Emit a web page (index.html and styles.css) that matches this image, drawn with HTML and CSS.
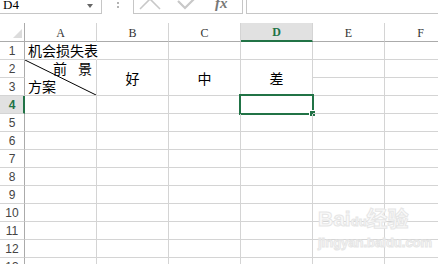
FILE: index.html
```html
<!DOCTYPE html>
<html lang="zh-CN">
<head>
  <meta charset="UTF-8">
  <title>机会损失表</title>
  <link rel="stylesheet" href="styles.css">
</head>
<body>
<!-- Formula bar -->
<div class="formula-bar">
  <div class="name-box">
    <span class="name-text">D4</span>
    <span class="name-arrow"></span>
  </div>
  <div class="bar-sep">
    <svg width="4" height="12" viewBox="0 0 4 12"><circle cx="2" cy="3" r="1" fill="#9a9a9a"/><circle cx="2" cy="7" r="1" fill="#9a9a9a"/></svg>
  </div>
  <div class="fx-box">
    <svg width="109" height="13" viewBox="0 0 109 13">
      <line x1="6" y1="-11" x2="26" y2="9" stroke="#c8c8c8" stroke-width="1.6"/>
      <line x1="26" y1="-11" x2="6" y2="9" stroke="#c8c8c8" stroke-width="1.6"/>
      <polyline points="44,1 51,8 63,-4" fill="none" stroke="#c8c8c8" stroke-width="2.2"/>
      <text x="81" y="8" class="fx-text">fx</text>
    </svg>
  </div>
  <div class="formula-input"></div>
</div>

<!-- Sheet -->
<div class="sheet">
  <!-- column headers -->
  <div class="corner">
    <svg width="24" height="18" viewBox="0 0 24 18"><polygon points="22,6 22,15 13,15" fill="#dcdcdc"/></svg>
  </div>
  <div class="ch">A</div>
  <div class="ch">B</div>
  <div class="ch">C</div>
  <div class="ch active">D</div>
  <div class="ch">E</div>
  <div class="ch">F</div>

  <!-- row 1 -->
  <div class="rh">1</div>
  <div class="cell overflow">机会损失表</div>
  <div class="cell"></div>
  <div class="cell"></div>
  <div class="cell"></div>
  <div class="cell"></div>
  <div class="cell"></div>

  <!-- rows 2-3 (merged) -->
  <div class="rh">2</div>
  <div class="cell merged diag">
    <svg class="diag-line" viewBox="0 0 100 100" preserveAspectRatio="none"><line x1="0" y1="0" x2="100" y2="100" stroke="#000" stroke-width="1" vector-effect="non-scaling-stroke"/></svg>
    <span class="diag-top">前<span class="gap"></span>景</span>
    <span class="diag-bottom">方案</span>
  </div>
  <div class="cell merged center">好</div>
  <div class="cell merged center">中</div>
  <div class="cell merged center">差</div>
  <div class="cell"></div>
  <div class="cell"></div>
  <div class="rh">3</div>
  <div class="cell"></div>
  <div class="cell"></div>

  <!-- row 4 -->
  <div class="rh active">4</div>
  <div class="cell"></div>
  <div class="cell"></div>
  <div class="cell"></div>
  <div class="cell selected"><span class="sel-box"><span class="sel-handle"></span></span></div>
  <div class="cell"></div>
  <div class="cell"></div>

  <div class="rh">5</div>
  <div class="cell"></div><div class="cell"></div><div class="cell"></div><div class="cell"></div><div class="cell"></div><div class="cell"></div>
  <div class="rh">6</div>
  <div class="cell"></div><div class="cell"></div><div class="cell"></div><div class="cell"></div><div class="cell"></div><div class="cell"></div>
  <div class="rh">7</div>
  <div class="cell"></div><div class="cell"></div><div class="cell"></div><div class="cell"></div><div class="cell"></div><div class="cell"></div>
  <div class="rh">8</div>
  <div class="cell"></div><div class="cell"></div><div class="cell"></div><div class="cell"></div><div class="cell"></div><div class="cell"></div>
  <div class="rh">9</div>
  <div class="cell"></div><div class="cell"></div><div class="cell"></div><div class="cell"></div><div class="cell"></div><div class="cell"></div>
  <div class="rh">10</div>
  <div class="cell"></div><div class="cell"></div><div class="cell"></div><div class="cell"></div><div class="cell"></div><div class="cell"></div>
  <div class="rh">11</div>
  <div class="cell"></div><div class="cell"></div><div class="cell"></div><div class="cell"></div><div class="cell"></div><div class="cell"></div>
  <div class="rh">12</div>
  <div class="cell"></div><div class="cell"></div><div class="cell"></div><div class="cell"></div><div class="cell"></div><div class="cell"></div>
  <div class="rh">13</div>
  <div class="cell"></div><div class="cell"></div><div class="cell"></div><div class="cell"></div><div class="cell"></div><div class="cell"></div>
</div>

<!-- Watermark -->
<div class="watermark">
  <div class="wm-logo">Bai<span class="wm-du">du</span>经验</div>
  <div class="wm-url">jingyan.baidu.com</div>
</div>
</body>
</html>
```

FILE: styles.css
```css
body {
  margin: 0;
  padding: 0;
  width: 438px;
  height: 264px;
  overflow: hidden;
  background-color: #fff;
  position: relative;
}

/* Formula bar */
.formula-bar {
  display: flex;
  height: 14px;
}

.name-box {
  width: 102px;
  height: 14px;
  box-sizing: border-box;
  border-right: 1px solid #c6c6c6;
  border-bottom: 1px solid #c6c6c6;
  display: flex;
  align-items: flex-start;
}

.name-text {
  font-family: "Liberation Serif", serif;
  font-size: 13px;
  line-height: 10px;
  padding-left: 3px;
  color: #000;
}

.name-arrow {
  margin-left: auto;
  margin-right: 8px;
  margin-top: 4px;
  border-left: 3px solid transparent;
  border-right: 3px solid transparent;
  border-top: 4px solid #666;
}

.bar-sep {
  width: 31px;
  display: flex;
  justify-content: center;
}

.fx-box {
  width: 110px;
  height: 14px;
  box-sizing: border-box;
  border-left: 1px solid #c6c6c6;
  border-right: 1px solid #c6c6c6;
  border-bottom: 1px solid #c6c6c6;
  overflow: hidden;
}

.fx-box svg {
  display: block;
}

.fx-text {
  font-family: "Liberation Serif", serif;
  font-style: italic;
  font-weight: bold;
  font-size: 15px;
  fill: #777;
}

.formula-input {
  flex: 1;
  margin-left: 3px;
  height: 14px;
  box-sizing: border-box;
  border-left: 1px solid #c6c6c6;
  border-bottom: 1px solid #c6c6c6;
}

/* Sheet grid */
.sheet {
  margin-top: 9px;
  display: grid;
  grid-template-columns: 25px repeat(6, 72px);
  grid-template-rows: 19px repeat(13, 18px);
  width: 457px;
}

.sheet > div {
  box-sizing: border-box;
}

.corner {
  border-right: 1px solid #ababab;
  border-bottom: 1px solid #ababab;
}

.corner svg {
  display: block;
}

.ch {
  border-right: 1px solid #d4d4d4;
  border-bottom: 1px solid #ababab;
  display: flex;
  align-items: center;
  justify-content: center;
  padding-top: 2px;
  font-family: "Liberation Serif", serif;
  font-size: 12px;
  color: #333;
}

.ch.active {
  background-color: #e1e1e1;
  border-bottom: 2px solid #217346;
  color: #217346;
  font-weight: bold;
}

.rh {
  border-right: 1px solid #ababab;
  border-bottom: 1px solid #d4d4d4;
  display: flex;
  align-items: center;
  justify-content: center;
  font-family: "Liberation Sans", sans-serif;
  font-size: 12px;
  color: #444;
}

.rh.active {
  background-color: #e1e1e1;
  border-right: 2px solid #217346;
  color: #217346;
  font-weight: bold;
  padding-left: 1px;
}

.cell {
  border-right: 1px solid #d4d4d4;
  border-bottom: 1px solid #d4d4d4;
  font-family: "Noto Sans CJK SC", sans-serif;
  font-size: 14px;
  color: #000;
  position: relative;
}

.cell.overflow {
  border-right-color: transparent;
  white-space: nowrap;
  padding-left: 3px;
  line-height: 17px;
}

.cell.merged {
  grid-row: span 2;
}

.cell.center {
  display: flex;
  align-items: center;
  justify-content: center;
}

.cell.diag {
  display: flex;
  flex-direction: column;
  justify-content: space-between;
  padding: 0 4px 0 3px;
  line-height: 17px;
}

.diag-top {
  align-self: flex-end;
  display: flex;
}

.diag-top .gap {
  width: 11px;
}

.diag-line {
  position: absolute;
  top: 0;
  left: 0;
  width: 100%;
  height: 100%;
}

/* Active cell selection */
.sel-box {
  position: absolute;
  top: -2px;
  left: -2px;
  right: -2px;
  bottom: -2px;
  border: 2px solid #217346;
}

.sel-handle {
  position: absolute;
  right: -4px;
  bottom: -4px;
  width: 5px;
  height: 5px;
  background-color: #217346;
  border: 1px solid #fff;
}

/* Watermark */
.watermark {
  position: absolute;
  left: 318px;
  top: 206px;
  color: #fafafa;
  -webkit-text-stroke: 1px #e6e6e6;
  font-family: "Liberation Sans", sans-serif;
  font-weight: bold;
}

.wm-logo {
  font-size: 21px;
  line-height: 26px;
  font-family: "Liberation Sans", "Noto Sans CJK SC", sans-serif;
}

.wm-du {
  font-size: 13px;
}

.wm-url {
  font-size: 13px;
  line-height: 16px;
}
```
